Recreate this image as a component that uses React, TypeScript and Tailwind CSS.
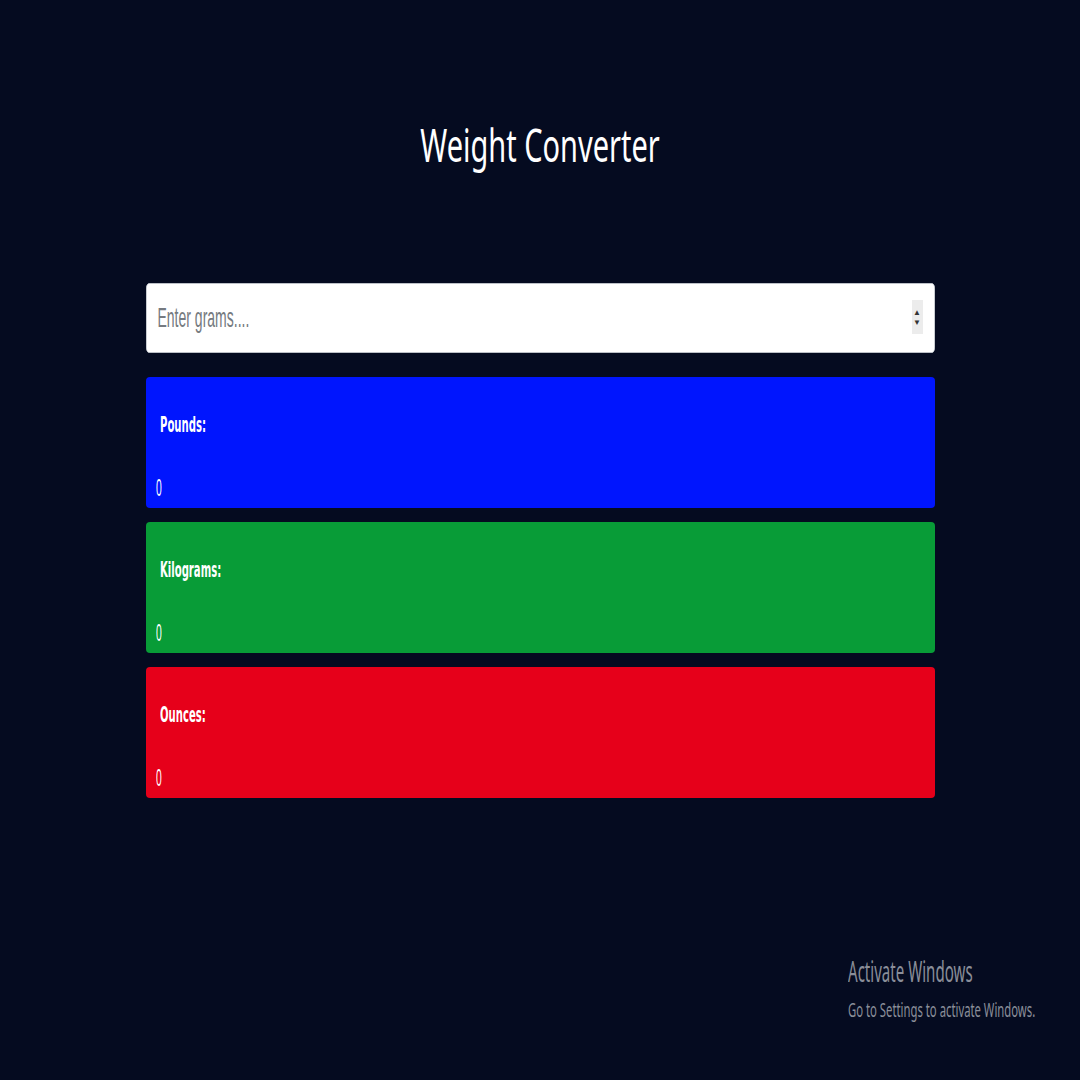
import React, { useState } from "react";

const cards = [
  { label: "Pounds:", bg: "bg-[#0015fe]", factor: 0.00220462 },
  { label: "Kilograms:", bg: "bg-[#089c37]", factor: 0.001 },
  { label: "Ounces:", bg: "bg-[#e6001a]", factor: 0.035274 },
];

export default function App() {
  const [grams, setGrams] = useState("");
  const g = parseFloat(grams) || 0;

  return (
    <div className="min-h-[1080px] w-full bg-[#050b20] flex flex-col items-center overflow-hidden font-['Noto_Sans',sans-serif]">
      {/* title */}
      <h1 className="mt-[109px] h-[70px] flex items-center justify-center text-[46px] font-normal text-white leading-none">
        <span className="inline-block scale-x-[0.63] origin-center whitespace-nowrap">Weight Converter</span>
      </h1>

      <div className="mt-[104px] w-[789px] flex flex-col">
        {/* input */}
        <div className="relative h-[70px] w-full">
          <input
            type="text"
            value={grams}
            onChange={(e) => setGrams(e.target.value)}
            placeholder="Enter grams...."
            className="h-[70px] w-[1578px] scale-x-50 origin-left rounded-md border border-[#cfd4da] bg-white px-[22px] text-[28px] text-[#222] placeholder:text-[#757a80] outline-none font-['Liberation_Sans',Arial,sans-serif]"
          />
          <div className="absolute right-[12px] top-[17px] w-[11px] h-[34px] bg-[#ececec] flex flex-col items-center justify-center gap-[2px] text-[8px] leading-none text-[#333]">
            <span>▲</span>
            <span>▼</span>
          </div>
        </div>

        {/* results */}
        <div className="mt-[24px] flex flex-col gap-[14px]">
          {cards.map((c) => (
            <div key={c.label} className={`${c.bg} h-[131px] rounded-[4px] flex flex-col text-white`}>
              <div className="mt-[37px] ml-[14px] h-[22px] flex items-center text-[21px] font-bold leading-none font-['DejaVu_Sans',sans-serif]">
                <span className="inline-block scale-x-[0.48] origin-left whitespace-nowrap">{c.label}</span>
              </div>
              <div className="mt-auto mb-[8px] ml-[10px] h-[24px] flex items-center text-[23px] leading-none font-['Liberation_Sans',Arial,sans-serif]">
                <span className="inline-block scale-x-[0.45] origin-left whitespace-nowrap">
                  {Number((g * c.factor).toFixed(4))}
                </span>
              </div>
            </div>
          ))}
        </div>
      </div>

      {/* windows watermark */}
      <div className="mt-auto self-end mr-[45px] mb-[60px] w-[187px] flex flex-col text-[#8a8e99] leading-none">
        <span className="inline-block h-[34px] text-[29px] scale-x-[0.52] origin-left whitespace-nowrap">Activate Windows</span>
        <span className="inline-block mt-[10px] text-[20px] scale-x-[0.565] origin-left whitespace-nowrap">Go to Settings to activate Windows.</span>
      </div>
    </div>
  );
}
